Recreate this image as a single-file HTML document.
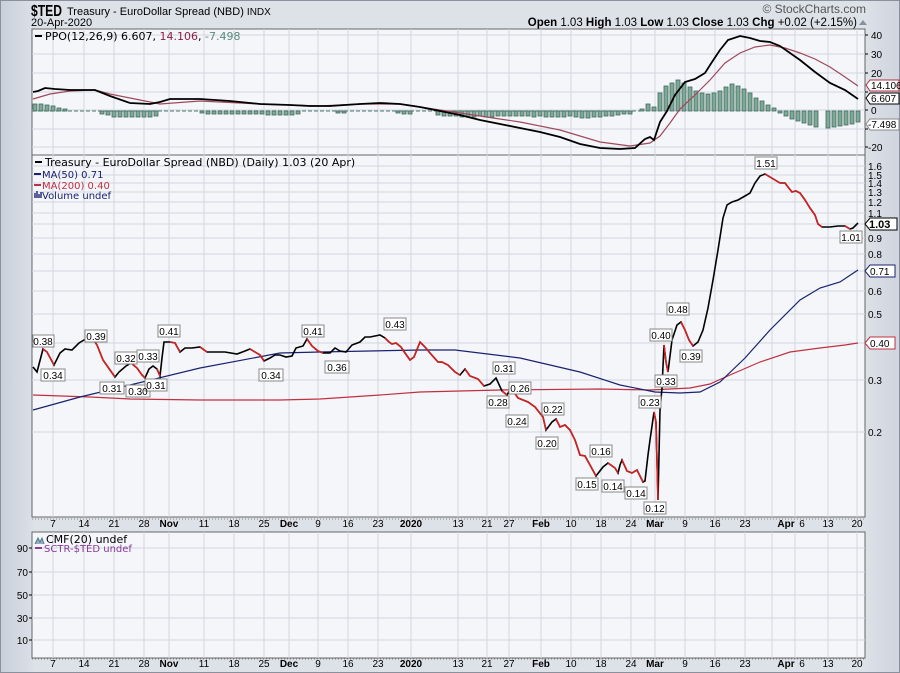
<!DOCTYPE html>
<html><head><meta charset="utf-8"><style>
html,body{margin:0;padding:0;width:900px;height:673px;overflow:hidden;background:#d5dae3;}
svg{display:block;font-family:"Liberation Sans",Arial,sans-serif;}
</style></head><body>
<svg width="900" height="673" viewBox="0 0 900 673" xmlns="http://www.w3.org/2000/svg">
<defs>
<linearGradient id="bg" x1="0" y1="0" x2="1" y2="0"><stop offset="0" stop-color="#c9cfd9"/><stop offset="0.04" stop-color="#dde1e8"/><stop offset="0.96" stop-color="#dde1e8"/><stop offset="1" stop-color="#cfd4dd"/></linearGradient>
</defs>
<rect x="0" y="0" width="900" height="673" fill="url(#bg)"/>
<rect x="0.5" y="0.5" width="899" height="672" fill="none" stroke="#8a919c"/>
<!-- header -->
<text x="31" y="16" font-size="16" font-weight="bold" textLength="31" lengthAdjust="spacingAndGlyphs" fill="#000">$TED</text>
<text x="67" y="15" font-size="11" fill="#000">Treasury - EuroDollar Spread (NBD) <tspan font-size="10">INDX</tspan></text>
<text x="31" y="26" font-size="11" fill="#000">20-Apr-2020</text>
<text x="866" y="13" font-size="12" fill="#555" text-anchor="end">© StockCharts.com</text>
<text x="857" y="26" font-size="11.5" text-anchor="end" fill="#000"><tspan font-weight="bold">Open</tspan> 1.03 <tspan font-weight="bold">High</tspan> 1.03 <tspan font-weight="bold">Low</tspan> 1.03 <tspan font-weight="bold">Close</tspan> 1.03 <tspan font-weight="bold">Chg</tspan> +0.02 (+2.15%)</text>
<polygon points="859,25 867,25 863,20" fill="#8a919c"/>

<!-- panels -->
<rect x="32" y="29" width="833" height="126" fill="#f4f6fa" stroke="#666"/>
<rect x="32" y="155" width="833" height="362" fill="#f4f6fa" stroke="#666"/>
<rect x="32" y="532" width="833" height="126" fill="#f4f6fa" stroke="#666"/>

<!-- vertical grid -->
<g stroke="#d2d6de" stroke-width="1">
<path d="M53 29V517M84 29V517M114 29V517M144 29V517M169 29V517M204 29V517M234 29V517M264 29V517M289 29V517M318 29V517M348 29V517M378 29V517M411 29V517M458 29V517M487 29V517M509 29V517M541 29V517M571 29V517M601 29V517M631 29V517M655 29V517M685 29V517M715 29V517M745 29V517M772 29V517M795 29V517M828 29V517M857 29V517"/>
<path d="M53 532V658M84 532V658M114 532V658M144 532V658M169 532V658M204 532V658M234 532V658M264 532V658M289 532V658M318 532V658M348 532V658M378 532V658M411 532V658M458 532V658M487 532V658M509 532V658M541 532V658M571 532V658M601 532V658M631 532V658M655 532V658M685 532V658M715 532V658M745 532V658M772 532V658M795 532V658M828 532V658M857 532V658"/>
<path d="M32 35H865M32 54H865M32 73H865M32 92H865M32 110H865M32 129H865M32 147H865"/>
<path d="M32 166H865M32 175H865M32 183H865M32 192H865M32 202H865M32 213H865M32 224H865M32 238H865M32 254H865M32 271H865M32 291H865M32 314H865M32 343H865M32 380H865M32 432H865"/>
<path d="M32 548H865M32 572H865M32 595H865M32 618H865M32 640H865"/>
</g>

<path d="M32 111H640" stroke="#4d7a6c" stroke-dasharray="4,2" fill="none"/>
<g fill="#7fa898" stroke="#3f6b5d" stroke-width="0.8">
<rect x="33" y="104" width="4" height="7"/><rect x="39" y="104" width="4" height="7"/><rect x="45" y="105" width="4" height="6"/><rect x="51" y="106" width="4" height="5"/><rect x="57" y="108" width="4" height="3"/><rect x="63" y="109" width="4" height="2"/>
<rect x="100" y="111" width="4" height="3"/><rect x="106" y="111" width="4" height="4"/><rect x="112" y="111" width="4" height="6"/><rect x="118" y="111" width="4" height="6"/><rect x="124" y="111" width="4" height="6"/><rect x="130" y="111" width="4" height="6"/><rect x="136" y="111" width="4" height="6"/><rect x="142" y="111" width="4" height="6"/><rect x="148" y="111" width="4" height="6"/><rect x="154" y="111" width="4" height="5"/>
<rect x="200" y="111" width="4" height="2"/><rect x="206" y="111" width="4" height="3"/><rect x="212" y="111" width="4" height="3"/><rect x="218" y="111" width="4" height="3"/><rect x="224" y="111" width="4" height="3"/><rect x="230" y="111" width="4" height="3"/><rect x="236" y="111" width="4" height="3"/><rect x="242" y="111" width="4" height="3"/><rect x="248" y="111" width="4" height="3"/><rect x="254" y="111" width="4" height="3"/><rect x="260" y="111" width="4" height="3"/><rect x="266" y="111" width="4" height="4"/><rect x="272" y="111" width="4" height="4"/><rect x="278" y="111" width="4" height="4"/><rect x="284" y="111" width="4" height="4"/><rect x="290" y="111" width="4" height="4"/><rect x="296" y="111" width="4" height="3"/>
<rect x="336" y="111" width="4" height="2"/><rect x="342" y="111" width="4" height="2"/><rect x="396" y="111" width="4" height="2"/><rect x="402" y="111" width="4" height="3"/><rect x="408" y="111" width="4" height="3"/>
<rect x="436" y="111" width="4" height="4"/><rect x="442" y="111" width="4" height="5"/><rect x="448" y="111" width="4" height="5"/><rect x="454" y="111" width="4" height="5"/><rect x="460" y="111" width="4" height="6"/><rect x="466" y="111" width="4" height="6"/><rect x="472" y="111" width="4" height="6"/><rect x="478" y="111" width="4" height="5"/><rect x="484" y="111" width="4" height="6"/><rect x="490" y="111" width="4" height="6"/><rect x="496" y="111" width="4" height="5"/><rect x="502" y="111" width="4" height="5"/><rect x="508" y="111" width="4" height="5"/><rect x="514" y="111" width="4" height="5"/><rect x="520" y="111" width="4" height="5"/><rect x="526" y="111" width="4" height="5"/><rect x="532" y="111" width="4" height="6"/><rect x="538" y="111" width="4" height="5"/><rect x="544" y="111" width="4" height="6"/><rect x="550" y="111" width="4" height="6"/><rect x="556" y="111" width="4" height="6"/><rect x="562" y="111" width="4" height="6"/><rect x="568" y="111" width="4" height="5"/><rect x="574" y="111" width="4" height="6"/><rect x="580" y="111" width="4" height="7"/><rect x="586" y="111" width="4" height="7"/><rect x="592" y="111" width="4" height="6"/><rect x="598" y="111" width="4" height="6"/><rect x="604" y="111" width="4" height="5"/><rect x="610" y="111" width="4" height="5"/><rect x="616" y="111" width="4" height="4"/><rect x="622" y="111" width="4" height="3"/><rect x="628" y="111" width="4" height="3"/>
<rect x="640" y="109" width="4" height="2"/><rect x="646" y="104" width="4" height="7"/><rect x="652" y="107" width="4" height="4"/><rect x="658" y="93" width="4" height="18"/><rect x="664" y="86" width="4" height="25"/><rect x="670" y="83" width="4" height="28"/><rect x="676" y="80" width="4" height="31"/><rect x="682" y="83" width="4" height="28"/><rect x="688" y="87" width="4" height="24"/><rect x="694" y="91" width="4" height="20"/><rect x="700" y="93" width="4" height="18"/><rect x="706" y="94" width="4" height="17"/><rect x="712" y="93" width="4" height="18"/><rect x="718" y="91" width="4" height="20"/><rect x="724" y="87" width="4" height="24"/><rect x="730" y="84" width="4" height="27"/><rect x="736" y="86" width="4" height="25"/><rect x="742" y="89" width="4" height="22"/><rect x="748" y="93" width="4" height="18"/><rect x="754" y="98" width="4" height="13"/><rect x="760" y="101" width="4" height="10"/><rect x="766" y="105" width="4" height="6"/><rect x="772" y="108" width="4" height="3"/>
<rect x="778" y="111" width="4" height="2"/><rect x="784" y="111" width="4" height="5"/><rect x="790" y="111" width="4" height="8"/><rect x="796" y="111" width="4" height="10"/><rect x="802" y="111" width="4" height="12"/><rect x="808" y="111" width="4" height="14"/><rect x="814" y="111" width="4" height="16"/><rect x="826" y="111" width="4" height="17"/><rect x="832" y="111" width="4" height="16"/><rect x="838" y="111" width="4" height="15"/><rect x="844" y="111" width="4" height="14"/><rect x="850" y="111" width="4" height="13"/><rect x="856" y="111" width="4" height="11"/>
</g>
<polyline fill="none" stroke="#a0485a" stroke-width="1.2" points="33,99 50,94 70,91 95,90 110,94 140,100 160,104 200,101 260,104 320,106 360,104 400,104 440,110 480,116 520,122 560,130 600,142 630,146 650,143 660,136 670,123 680,109 695,95 710,80 725,63 740,53 755,47 770,45 785,48 800,53 815,59 830,67 845,77 858,86"/>
<polyline fill="none" stroke="#000" stroke-width="1.8" points="33,92 38,91 45,88 55,89 70,90 95,90 110,96 130,103 150,104 160,102 170,99 200,99 230,101 260,104 290,105 310,106 330,106 360,104 380,103 400,104 420,107 440,111 460,115 480,120 500,124 520,128 540,132 560,137 580,144 600,148 620,149 635,148 645,139 650,137 654,140 660,122 667,111 675,95 685,82 695,79 705,73 712,62 720,50 728,40 740,36 750,38 760,41 770,42 780,46 790,53 800,60 815,72 830,83 845,90 858,99"/>

<polyline fill="none" stroke="#c03040" stroke-width="1.2" points="33,395 90,397 130,399 200,400 280,400 320,399 380,395 420,392 500,390 600,389 650,390 690,388 710,384 730,375 760,362 790,352 820,348 845,345 858,343"/>
<polyline fill="none" stroke="#1a2270" stroke-width="1.2" points="33,410 80,397 130,385 200,368 280,353 320,352 420,350 455,350 520,358 580,372 620,385 655,392 680,393 700,392 720,382 745,358 770,330 800,300 820,288 840,282 858,270"/>
<polyline fill="none" stroke="#000" stroke-width="1.6" points="33,367 37,372 43,349 47,352 54,365 60,353 65,349 72,350 79,343 84,340 93,339 97,345 103,360 110,370 115,377 119,372 126,366 131,363 137,368 142,375 145,378 149,369 153,366 157,369 160,376 162,358 164,342 170,342 175,343 180,352 185,348 192,348 200,347 207,352 215,352 225,352 237,354 245,351 250,349 255,352 260,355 264,361 270,358 275,355 280,355 286,357 292,356 296,348 303,346 307,339 312,346 318,351 323,353 330,353 335,348 340,351 346,352 352,345 360,342 365,337 370,337 375,336 380,335 385,338 389,342 392,344 396,343 401,347 405,353 410,360 414,357 420,342 425,347 430,353 438,362 442,362 448,365 455,372 460,375 465,369 470,376 478,379 484,386 490,384 496,378 502,391 507,395 511,388 518,398 528,402 535,407 543,417 546,430 552,422 556,419 560,427 565,425 570,430 575,440 580,455 585,456 590,465 596,476 603,467 608,463 615,468 618,473 620,465 622,460 627,471 632,473 637,470 640,476 643,482 645,481 648,455 650,440 652,426 654,412 656,422 658,500 660,410 662,388 664,345 666,362 668,372 672,340 677,325 681,322 685,330 689,340 693,346 698,342 703,330 708,308 713,280 718,250 723,218 727,205 732,202 738,200 745,196 750,193 755,183 760,176 765,174 770,177 775,180 780,183 785,183 788,187 792,192 796,191 800,193 805,200 810,208 815,215 818,224 822,227 830,227 838,226 845,226 850,229 853,228 858,223"/>
<g fill="none" stroke="#d42020" stroke-width="1.6">
<polyline points="43,349 47,352 54,365"/>
<polyline points="93,339 97,345 103,360 110,370 115,377"/>
<polyline points="131,363 137,368 142,375 145,378"/>
<polyline points="157,369 160,376"/>
<polyline points="170,342 175,343 180,352"/>
<polyline points="200,347 207,352"/>
<polyline points="250,349 255,352 260,355 264,361"/>
<polyline points="307,339 312,346 318,351 323,353"/>
<polyline points="385,338 389,342 392,344 396,343 401,347 405,353 410,360 414,357 420,342 425,347 430,353 438,362 442,362 448,365 455,372 460,375"/>
<polyline points="465,369 470,376 478,379 484,386"/>
<polyline points="502,391 507,395"/>
<polyline points="511,388 518,398 528,402 535,407 543,417 546,430"/>
<polyline points="556,419 560,427 565,425 570,430 575,440 580,455 585,456 590,465 596,476"/>
<polyline points="608,463 615,468 618,473"/>
<polyline points="622,460 627,471 632,473 637,470 640,476 643,482"/>
<polyline points="654,412 656,422 658,500"/>
<polyline points="664,345 666,362 668,372"/>
<polyline points="681,322 685,330 689,340 693,346"/>
<polyline points="765,174 770,177 775,180 780,183 785,183 788,187 792,192 796,191 800,193 805,200 810,208 815,215 818,224 822,227"/>
<polyline points="845,226 850,229"/>
</g>

<g font-size="10" fill="#000" text-anchor="middle">
<g fill="#fff" stroke="#888" stroke-width="1">
<rect x="33" y="335" width="21" height="12"/><rect x="41" y="369" width="24" height="12"/><rect x="85" y="330" width="22" height="12"/><rect x="115" y="352" width="22" height="12"/><rect x="100" y="382" width="24" height="12"/><rect x="126" y="385" width="24" height="12"/><rect x="137" y="350" width="22" height="12"/><rect x="145" y="379" width="22" height="12"/><rect x="158" y="325" width="22" height="12"/><rect x="259" y="369" width="24" height="12"/><rect x="302" y="325" width="22" height="12"/><rect x="325" y="361" width="24" height="12"/><rect x="384" y="318" width="22" height="12"/><rect x="493" y="362" width="22" height="12"/><rect x="487" y="396" width="22" height="12"/><rect x="509" y="382" width="22" height="12"/><rect x="506" y="415" width="22" height="12"/><rect x="542" y="403" width="22" height="12"/><rect x="536" y="437" width="22" height="12"/><rect x="590" y="445" width="22" height="12"/><rect x="576" y="478" width="22" height="12"/><rect x="602" y="480" width="22" height="12"/><rect x="625" y="487" width="22" height="12"/><rect x="639" y="396" width="22" height="12"/><rect x="644" y="502" width="22" height="12"/><rect x="650" y="329" width="22" height="12"/><rect x="655" y="375" width="22" height="12"/><rect x="667" y="303" width="22" height="12"/><rect x="680" y="350" width="22" height="12"/><rect x="755" y="157" width="22" height="12"/><rect x="840" y="231" width="22" height="12"/>
</g>
<text x="43" y="345">0.38</text><text x="53" y="379">0.34</text><text x="96" y="340">0.39</text><text x="126" y="362">0.32</text><text x="112" y="392">0.31</text><text x="138" y="395">0.30</text><text x="148" y="360">0.33</text><text x="156" y="389">0.31</text><text x="169" y="335">0.41</text><text x="271" y="379">0.34</text><text x="313" y="335">0.41</text><text x="337" y="371">0.36</text><text x="395" y="328">0.43</text><text x="504" y="372">0.31</text><text x="498" y="406">0.28</text><text x="520" y="392">0.26</text><text x="517" y="425">0.24</text><text x="553" y="413">0.22</text><text x="547" y="447">0.20</text><text x="601" y="455">0.16</text><text x="587" y="488">0.15</text><text x="613" y="490">0.14</text><text x="636" y="497">0.14</text><text x="650" y="406">0.23</text><text x="655" y="512">0.12</text><text x="661" y="339">0.40</text><text x="666" y="385">0.33</text><text x="678" y="313">0.48</text><text x="691" y="360">0.39</text><text x="766" y="167">1.51</text><text x="851" y="241">1.01</text>
</g>

<g font-size="10" fill="#000">
<text x="871" y="39">40</text><text x="871" y="58">30</text><text x="871" y="77">20</text><text x="871" y="114">0</text><text x="868" y="151">-20</text>
<path d="M865 35h3M865 54h3M865 73h3M865 92h3M865 110h3M865 129h3M865 147h3" stroke="#000"/>
<polygon points="866,85 870,80 899,80 899,91 870,91" fill="#fff" stroke="#b03040"/><text x="871" y="89" fill="#000">14.106</text>
<polygon points="866,98 870,93 899,93 899,104 870,104" fill="#fff" stroke="#000"/><text x="871" y="102">6.607</text>
<polygon points="866,124 870,119 899,119 899,130 870,130" fill="#fff" stroke="#888"/><text x="868" y="128">-7.498</text>
</g>
<g font-size="10" fill="#000">
<text x="868" y="170">1.6</text><text x="868" y="179">1.5</text><text x="868" y="187">1.4</text><text x="868" y="196">1.3</text><text x="868" y="206">1.2</text><text x="868" y="217">1.1</text><text x="868" y="242">0.9</text><text x="868" y="258">0.8</text><text x="868" y="295">0.6</text><text x="868" y="318">0.5</text><text x="868" y="384">0.3</text><text x="868" y="436">0.2</text>
<polygon points="865,224 870,218 897,218 897,230 870,230" fill="#fff" stroke="#000"/><text x="869" y="228" font-weight="bold" font-size="11">1.03</text>
<polygon points="865,271 870,265 895,265 895,277 870,277" fill="#fff" stroke="#1a2270"/><text x="870" y="275">0.71</text>
<polygon points="865,343 870,337 895,337 895,349 870,349" fill="#fff" stroke="#c03040"/><text x="870" y="347">0.40</text>
</g>
<g font-size="10" fill="#000" text-anchor="end">
<text x="28" y="552">90</text><text x="28" y="576">70</text><text x="28" y="599">50</text><text x="28" y="622">30</text><text x="28" y="644">10</text>
<path d="M29 548h3M29 572h3M29 595h3M29 618h3M29 640h3" stroke="#000"/>
</g>

<g font-size="11" font-family="DejaVu Sans,sans-serif">
<path d="M35 36h7" stroke="#000" stroke-width="2"/><text x="45" y="40" fill="#000">PPO(12,26,9) 6.607, <tspan fill="#8a2040">14.106</tspan>, <tspan fill="#5a8a7a">-7.498</tspan></text>
<path d="M35 162h7" stroke="#000" stroke-width="2"/><text x="45" y="166" fill="#000">Treasury - EuroDollar Spread (NBD) (Daily) 1.03 (20 Apr)</text>
<path d="M34 174h7" stroke="#1a2270" stroke-width="2"/><text x="42" y="178" fill="#1a2270" font-size="10">MA(50) 0.71</text>
<path d="M34 185h7" stroke="#c03040" stroke-width="2"/><text x="42" y="189" fill="#c03040" font-size="10">MA(200) 0.40</text>
<path d="M35 198v-5M37 198v-7M39 198v-4M41 198v-6" stroke="#1a2270" stroke-width="1.4"/><text x="42" y="199" fill="#1a2270" font-size="10">Volume undef</text>
<path d="M35 544l3-6 2 4 2-4 2 6" stroke="#4a7a8a" fill="#9ab" stroke-width="1"/><text x="46" y="543" fill="#000">CMF(20) undef</text>
<path d="M35 548h7" stroke="#8a3a9a" stroke-width="2"/><text x="44" y="552" fill="#8a3a9a" font-size="10">SCTR-$TED undef</text>
</g>

<g font-size="10" fill="#000" text-anchor="middle">
<g id="xl">
<text x="53" y="527">7</text><text x="84" y="527">14</text><text x="114" y="527">21</text><text x="144" y="527">28</text><text x="169" y="527" font-weight="bold">Nov</text><text x="204" y="527">11</text><text x="234" y="527">18</text><text x="264" y="527">25</text><text x="289" y="527" font-weight="bold">Dec</text><text x="318" y="527">9</text><text x="348" y="527">16</text><text x="378" y="527">23</text><text x="411" y="527" font-weight="bold">2020</text><text x="458" y="527">13</text><text x="487" y="527">21</text><text x="509" y="527">27</text><text x="541" y="527" font-weight="bold">Feb</text><text x="571" y="527">10</text><text x="601" y="527">18</text><text x="631" y="527">24</text><text x="655" y="527" font-weight="bold">Mar</text><text x="685" y="527">9</text><text x="715" y="527">16</text><text x="745" y="527">23</text><text x="786" y="527" font-weight="bold">Apr</text><text x="802" y="527">6</text><text x="828" y="527">13</text><text x="857" y="527">20</text>
</g>
<use href="#xl" y="140"/>
</g>
<path d="M32 519H865M32 659H865" stroke="#888" stroke-dasharray="1,2"/>
</svg>
</body></html>
